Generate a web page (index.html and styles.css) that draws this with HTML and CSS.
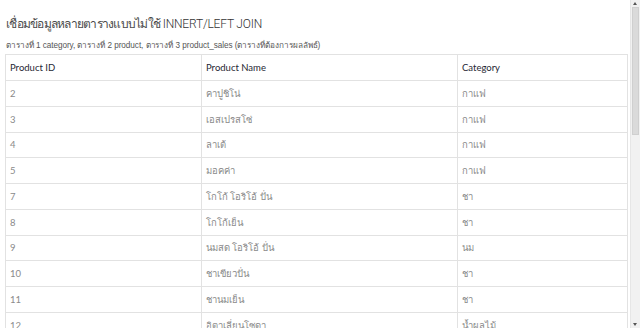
FILE: index.html
```html
<!DOCTYPE html>
<html lang="th">
<head>
<meta charset="utf-8">
<title>เชื่อมข้อมูลหลายตาราง</title>
<link rel="stylesheet" href="styles.css">
</head>
<body>
<main class="page">
  <h1 class="title"><span class="th">เชื่อมข้อมูลหลายตารางแบบไม่ใช้</span> INNERT/LEFT JOIN</h1>
  <p class="sub">ตารางที่ 1 category, ตารางที่ 2 product, ตารางที่ 3 product_sales (ตารางที่ต้องการผลลัพธ์)</p>
  <table class="grid">
    <colgroup><col class="c1"><col class="c2"><col class="c3"></colgroup>
    <thead>
      <tr><th>Product ID</th><th>Product Name</th><th>Category</th></tr>
    </thead>
    <tbody>
      <tr><td>2</td><td>คาปูชิโน่</td><td>กาแฟ</td></tr>
      <tr><td>3</td><td>เอสเปรสโซ่</td><td>กาแฟ</td></tr>
      <tr><td>4</td><td>ลาเต้</td><td>กาแฟ</td></tr>
      <tr><td>5</td><td>มอคค่า</td><td>กาแฟ</td></tr>
      <tr><td>7</td><td>โกโก้ โอริโอ้ ปั่น</td><td>ชา</td></tr>
      <tr><td>8</td><td>โกโก้เย็น</td><td>ชา</td></tr>
      <tr><td>9</td><td>นมสด โอริโอ้ ปั่น</td><td>นม</td></tr>
      <tr><td>10</td><td>ชาเขียวปั่น</td><td>ชา</td></tr>
      <tr><td>11</td><td>ชานมเย็น</td><td>ชา</td></tr>
      <tr><td>12</td><td>อิตาเลี่ยนโซดา</td><td>น้ำผลไม้</td></tr>
    </tbody>
  </table>
</main>
<div class="scrollbar">
  <div class="arrow up"></div>
  <div class="thumb"></div>
  <div class="arrow down"></div>
</div>
</body>
</html>
```
FILE: styles.css
```css
html, body {
  margin: 0;
  padding: 0;
  background: #fff;
  overflow: hidden;
}
body {
  font-family: "Liberation Sans", "Noto Sans", "Noto Sans CJK SC", sans-serif;
  color: #333;
}
.page {
  width: 622px;
  padding: 0 0 0 5px;
}
.title {
  margin: 0;
  padding: 15px 0 0 1px;
  font-family: "Roboto", "Noto Sans", sans-serif;
  font-weight: 300;
  font-size: 12px;
  line-height: 18px;
  color: #333;
  letter-spacing: -0.2px;
}
.title .th {
  font-size: 12px;
  letter-spacing: -0.75px;
  font-weight: 300;
  color: #4a4a4a;
}
.sub {
  margin: 0;
  padding: 7px 0 0 1px;
  font-size: 8.2px;
  line-height: 12px;
  color: #555;
  letter-spacing: -0.05px;
}
.grid {
  margin-top: 2px;
  width: 622px;
  border-collapse: collapse;
  table-layout: fixed;
  font-family: "Lato", "Noto Sans", sans-serif;
  font-size: 9.5px;
}
.c1 { width: 196px; }
.c2 { width: 256px; }
.c3 { width: 170px; }
.grid th, .grid td {
  border: 1px solid #e2e2e2;
  text-align: left;
  padding: 0 4px;
  vertical-align: middle;
}
.grid th {
  height: 25px;
  font-weight: 400;
  color: #1f2733;
}
.grid td {
  height: 24.75px;
  color: #8a8a8a;
}
.scrollbar {
  position: fixed;
  top: 0;
  right: 0;
  width: 9px;
  height: 328px;
  background: #f1f1f1;
  border-left: 1px solid #e6e6e6;
}
.thumb {
  position: absolute;
  left: 1px;
  top: 7px;
  width: 7px;
  height: 128px;
  background: #dadada;
  border: 1px solid #cfcfcf;
  box-sizing: border-box;
}
.arrow {
  position: absolute;
  left: 2px;
  width: 0;
  height: 0;
  border-left: 2px solid transparent;
  border-right: 2px solid transparent;
}
.arrow.up { top: 2px; border-bottom: 3px solid #555; }
.arrow.down { bottom: 2px; border-top: 3px solid #555; }
```
